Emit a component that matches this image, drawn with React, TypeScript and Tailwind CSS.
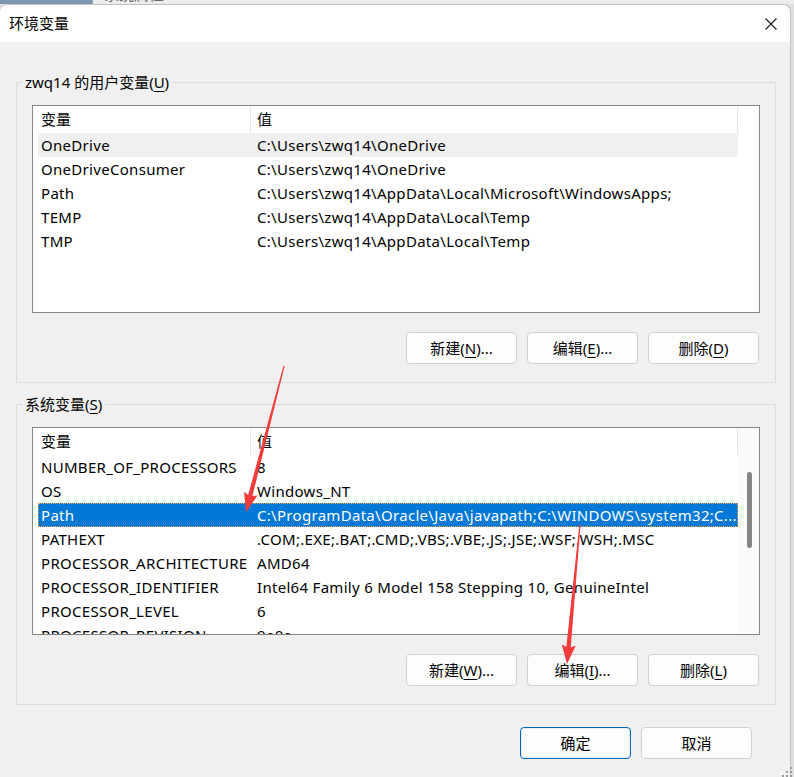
import type { ReactNode } from 'react';

type EnvVar = { name: string; value: string };

const USER_VARS: EnvVar[] = [
  { name: 'OneDrive', value: 'C:\\Users\\zwq14\\OneDrive' },
  { name: 'OneDriveConsumer', value: 'C:\\Users\\zwq14\\OneDrive' },
  { name: 'Path', value: 'C:\\Users\\zwq14\\AppData\\Local\\Microsoft\\WindowsApps;' },
  { name: 'TEMP', value: 'C:\\Users\\zwq14\\AppData\\Local\\Temp' },
  { name: 'TMP', value: 'C:\\Users\\zwq14\\AppData\\Local\\Temp' },
];

const SYSTEM_VARS: EnvVar[] = [
  { name: 'NUMBER_OF_PROCESSORS', value: '8' },
  { name: 'OS', value: 'Windows_NT' },
  { name: 'Path', value: 'C:\\ProgramData\\Oracle\\Java\\javapath;C:\\WINDOWS\\system32;C...' },
  { name: 'PATHEXT', value: '.COM;.EXE;.BAT;.CMD;.VBS;.VBE;.JS;.JSE;.WSF;.WSH;.MSC' },
  { name: 'PROCESSOR_ARCHITECTURE', value: 'AMD64' },
  { name: 'PROCESSOR_IDENTIFIER', value: 'Intel64 Family 6 Model 158 Stepping 10, GenuineIntel' },
  { name: 'PROCESSOR_LEVEL', value: '6' },
  { name: 'PROCESSOR_REVISION', value: '9e0a' },
];

function Key({ children }: { children: ReactNode }) {
  return <span className="underline underline-offset-[3px]">{children}</span>;
}

function Button({ children, primary }: { children: ReactNode; primary?: boolean }) {
  return (
    <button
      type="button"
      className={[
        'flex h-[32px] w-[111px] items-center justify-center rounded-[4px] border bg-[#fdfdfd] text-[15px] text-black',
        primary ? 'border-[#0067c0] shadow-[inset_0_0_0_1px_#e6f0fa]' : 'border-[#d1d1d1]',
      ].join(' ')}
    >
      {children}
    </button>
  );
}

function VarList({
  rows,
  hovered,
  selected,
  scroll,
}: {
  rows: EnvVar[];
  hovered?: number;
  selected?: number;
  scroll?: boolean;
}) {
  return (
    <div className="flex h-[208px] overflow-hidden border border-[#868686] bg-white">
      <div className="w-[705px] shrink-0">
        <div className="flex h-[27px] items-center">
          <div className="flex h-full w-[218px] items-center border-r border-[#e5e5e5] pl-[8px]">变量</div>
          <div className="flex h-full w-[487px] items-center border-r border-[#e5e5e5] pl-[6px]">值</div>
        </div>
        {rows.map((r, i) => (
          <div
            key={r.name}
            className={[
              'ml-[5px] flex h-[24px] w-[700px] items-center overflow-hidden whitespace-nowrap tracking-[0.3px]',
              i === selected
                ? 'bg-[#0078d7] text-white outline-1 -outline-offset-1 outline-dotted outline-[#f0a35a]'
                : i === hovered
                  ? 'bg-[#f0f0f0]'
                  : '',
            ].join(' ')}
          >
            <div className="w-[213px] shrink-0 pl-[3px]">{r.name}</div>
            <div className="pl-[6px]">{r.value}</div>
          </div>
        ))}
      </div>
      {scroll && (
        <div className="w-[22px] shrink-0 bg-[#fafafa]">
          <div className="ml-[9px] mt-[44px] h-[76px] w-[5px] rounded-full bg-[#858585]" />
        </div>
      )}
    </div>
  );
}

function Group({ label, children }: { label: ReactNode; children: ReactNode }) {
  return (
    <div className="relative border border-[#dcdcdc] px-[15px] pb-[18px] pt-[22px]">
      <span className="absolute -top-[12px] left-[5px] bg-[#f0f0f0] px-[3px] leading-[22px]">{label}</span>
      {children}
    </div>
  );
}

function Arrow({ x, y, angle, length }: { x: number; y: number; angle: number; length: number }) {
  // drawn pointing down with the tip at the origin, then turned into place
  return (
    <g transform={`translate(${x} ${y}) rotate(${angle})`}>
      <polygon
        fill="#f23b3b"
        points={`-0.6,${-length} 0.6,${-length} 2.2,-17 7,-19 0,0 -7,-19 -2.2,-17`}
      />
    </g>
  );
}

export default function App() {
  return (
    <div className="relative flex h-[777px] w-[794px] flex-col overflow-hidden bg-[#dedede] font-['Noto_Sans','Noto_Sans_CJK_SC',sans-serif] text-[15px] text-black">
      {/* window behind the dialog */}
      <div className="flex h-[4px] shrink-0 overflow-hidden">
        <div className="w-[92px] bg-[#7b97b4]" />
        <div className="flex-1 border-l border-[#9aa4ad] bg-[#ececec] pl-[11px]">
          <span className="-mt-[17px] block text-[#6a6a6a]">系统属性</span>
        </div>
      </div>

      <div className="flex flex-1">
        <div className="flex w-[791px] flex-col overflow-hidden rounded-t-[8px] border-r border-t border-[#c2c2c2] bg-[#f0f0f0]">
          <div className="flex h-[37px] shrink-0 items-center justify-between bg-white pl-[9px] pr-[13px]">
            <span className="text-[15px]">环境变量</span>
            <svg width="12" height="12" viewBox="0 0 12 12" className="text-[#1a1a1a]">
              <path d="M0.5 0.5 L11.5 11.5 M11.5 0.5 L0.5 11.5" stroke="currentColor" strokeWidth="1.1" />
            </svg>
          </div>

          <div className="flex flex-col pl-[16px] pr-[14px] pt-[40px]">
            <Group
              label={
                <>
                  zwq14 的用户变量(<Key>U</Key>)
                </>
              }
            >
              <VarList rows={USER_VARS} hovered={0} />
              <div className="mr-[1px] mt-[19px] flex justify-end gap-[10px]">
                <Button>
                  新建(<Key>N</Key>)...
                </Button>
                <Button>
                  编辑(<Key>E</Key>)...
                </Button>
                <Button>
                  删除(<Key>D</Key>)
                </Button>
              </div>
            </Group>

            <div className="mt-[21px]">
              <Group
                label={
                  <>
                    系统变量(<Key>S</Key>)
                  </>
                }
              >
                <VarList rows={SYSTEM_VARS} selected={2} scroll />
                <div className="mr-[1px] mt-[19px] flex justify-end gap-[10px]">
                  <Button>
                    新建(<Key>W</Key>)...
                  </Button>
                  <Button>
                    编辑(<Key>I</Key>)...
                  </Button>
                  <Button>
                    删除(<Key>L</Key>)
                  </Button>
                </div>
              </Group>
            </div>

            <div className="mr-[24px] mt-[22px] flex justify-end gap-[10px]">
              <Button primary>确定</Button>
              <Button>取消</Button>
            </div>
          </div>
        </div>
      </div>

      {/* size grip */}
      <svg className="absolute bottom-0 right-0" width="16" height="11" viewBox="0 0 16 11">
        <g fill="#9a9a9a">
          <rect x="12" y="1" width="2" height="2" />
          <rect x="8" y="5" width="2" height="2" />
          <rect x="12" y="5" width="2" height="2" />
          <rect x="4" y="9" width="2" height="2" />
          <rect x="8" y="9" width="2" height="2" />
          <rect x="12" y="9" width="2" height="2" />
        </g>
      </svg>

      {/* annotation arrows */}
      <svg className="pointer-events-none absolute left-0 top-0" width="794" height="777">
        <Arrow x={246} y={512} angle={14.6} length={151} />
        <Arrow x={567} y={664} angle={5.3} length={140} />
      </svg>
    </div>
  );
}
